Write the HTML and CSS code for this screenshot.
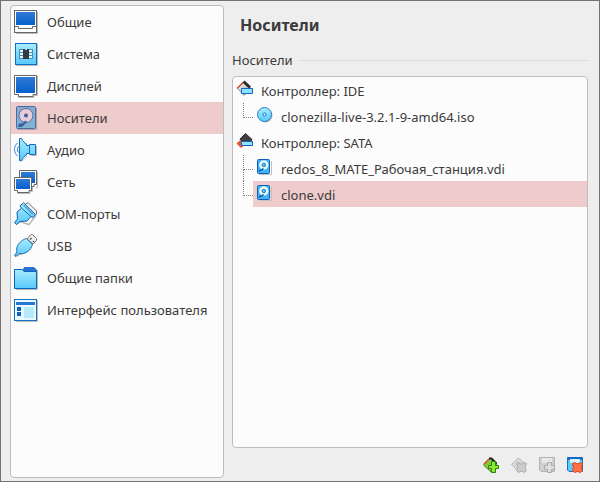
FILE: index.html
```html
<!DOCTYPE html>
<html lang="ru">
<head>
<meta charset="utf-8">
<title>Носители</title>
<link rel="stylesheet" href="styles.css">
</head>
<body>
<svg class="defs" aria-hidden="true">
  <defs>
    <linearGradient id="cyan" x1="0" y1="0" x2="0" y2="1"><stop offset="0" stop-color="#a8ecfc"/><stop offset="1" stop-color="#58c8fa"/></linearGradient>
    <linearGradient id="blue" x1="0" y1="0" x2="0" y2="1"><stop offset="0" stop-color="#2f7bd6"/><stop offset="1" stop-color="#0560cc"/></linearGradient>
    <linearGradient id="steel" x1="0" y1="0" x2="0" y2="1"><stop offset="0" stop-color="#8fa9cf"/><stop offset="1" stop-color="#7db4d2"/></linearGradient>
    <linearGradient id="grey" x1="0" y1="0" x2="1" y2="1"><stop offset="0" stop-color="#fff"/><stop offset="1" stop-color="#999"/></linearGradient>
    <symbol id="disk" viewBox="0 0 17 17">
      <path d="M3 16.500h12.500V3" fill="none" stroke="#c2c2c2"/>
      <rect x="1.500" y="1.500" width="12" height="14" rx="1" fill="#43b4f1" stroke="#0d62b8"/>
      <circle cx="7.800" cy="7" r="4.700" fill="#e3faff"/>
      <circle cx="7.800" cy="7" r="1.700" fill="#68c9f5" stroke="#1672c4"/>
      <path d="M3 13.500c1-2 3-1 4.500-3" fill="none" stroke="#0c5cb4" stroke-width="1.600"/>
    </symbol>
  </defs>
</svg>
<main class="window">
  <nav class="sections">
    <button class="section"><svg viewBox="0 0 24 24"><path d="M2 23.500h21.500V2" fill="none" stroke="#bbb"/><rect x=".5" y=".5" width="22" height="22" fill="#fff" stroke="#666"/><path d="M2 2h19v13H2z" fill="url(#blue)"/><path d="M1 16.500h3.500v2h14v-2H22" fill="none" stroke="#666"/></svg>Общие</button>
    <button class="section"><svg viewBox="0 0 24 24"><path d="M2 23.500h21.500V2" fill="none" stroke="#bbb"/><rect x="1.500" y="1.500" width="21" height="21" fill="url(#cyan)" stroke="#0f6cc8"/><path d="M5 7h14v10H5z" fill="#4a8fb8"/><path d="M6 8h12v2H6zM6 11h12v2H6zM6 14h12v2H6z" fill="#dffaff"/><path d="M9 7h6v10H9z" fill="#333842"/><path d="M11 7h2v1h-2z" fill="#8ee4fa"/></svg>Система</button>
    <button class="section"><svg viewBox="0 0 24 24"><path d="M4 23.500h16v-2h3.500V2" fill="none" stroke="#bbb"/><path d="M.5 1.500h22v19H19v2H4.500v-2h-4z" fill="#fff" stroke="#666"/><path d="M2 3h19v16H2z" fill="url(#blue)"/></svg>Дисплей</button>
    <button class="section selected" aria-current="page"><svg viewBox="0 0 24 24"><path d="M3 23.500h19.500V2" fill="none" stroke="#b99ca8"/><rect x="2.500" y=".5" width="19" height="22" rx="1" fill="url(#steel)" stroke="#456da8"/><circle cx="12" cy="9.500" r="7" fill="#e7ccd5" stroke="#536da8"/><circle cx="12" cy="9.500" r="2" fill="#405da4"/><path d="M4 20.500c0-3 2-4 4-3l3.500-3 1.500 1.500-3.500 3.500c-1.500 2-3.500 2-5.500 1z" fill="#3f5da3"/></svg>Носители</button>
    <button class="section"><svg viewBox="0 0 24 24"><path d="M3.500 5C-.5 9-.5 14 3.500 18M4.500 8.500c-1.500 2-1.500 4 0 6" fill="none" stroke="#3984d3"/><path d="M6.500 23.500c3-1 4-3 6.500-5.500M17 17.500h5.500V8" fill="none" stroke="#bbb"/><path d="M5.500.5h2C8.500 3 10.500 5 12.500 6v1.500h3v-1h6v10h-6v-1h-3V17c-2 1-4 3-5 5.500h-2z" fill="url(#cyan)" stroke="#146ac3"/><path d="M15.500 7.500v8" stroke="#146ac3"/></svg>Аудио</button>
    <button class="section"><svg viewBox="0 0 24 24"><path d="M22 17.500h1.500V2M3 23.500h13v-2h2.500V10" fill="none" stroke="#bbb"/><path d="M5.500.5h17v14H20v2H8v-2H5.500z" fill="#fff" stroke="#666"/><path d="M7 2h14v11H7z" fill="url(#blue)"/><path d="M.5 7.500h17v13H15v2H3.500v-2h-3z" fill="#fff" stroke="#666"/><path d="M2 9h14v10H2z" fill="url(#blue)"/></svg>Сеть</button>
    <button class="section"><svg viewBox="0 0 24 24"><path d="M11 2.500l3-2L22.500 9v3l-2 2z" fill="#eee" stroke="#777"/><path d="M2 22.500l4-3 9 3 7-9" fill="none" stroke="#bbb" stroke-width="1.500"/><path d="M.5 20.500l3-3.500-.5-7 4.500-4-1.500-2L9.500.8 21.500 12.500l-2.500 3-2-1-4 4.500-7 .5-3.500 3z" fill="url(#cyan)" stroke="#155faf"/><path d="M7.500 6l9.500 8.500M9.500 3l9.500 9.500" fill="none" stroke="#1768b9"/></svg>COM-порты</button>
    <button class="section"><svg viewBox="0 0 24 24"><path d="M13 5l4-4.500h1.500l4 4v2L19 10z" fill="#eee" stroke="#777"/><path d="M16 5.500l1.500-1.500M19 8l1-1" stroke="#555" stroke-width="1.500"/><path d="M3 22.500c2-4 9-1 14-9" fill="none" stroke="#bbb" stroke-width="1.500"/><path d="M.5 21.500L3 18C1 12 7 6 12.500 4.500l6 6C17 16 11 21 5 19.500l-3 3z" fill="url(#cyan)" stroke="#246cae"/></svg>USB</button>
    <button class="section"><svg viewBox="0 0 24 24"><path d="M2 23.500h21.500V4" fill="none" stroke="#bbb"/><path d="M8 4l2.500-3H20l3 3v2H8z" fill="#2873d0"/><path d="M.5 3.500H8l2 2h12.500v17H.5z" fill="url(#cyan)" stroke="#0d66bd"/></svg>Общие папки</button>
    <button class="section"><svg viewBox="0 0 24 24"><path d="M2 23.500h21.500V2" fill="none" stroke="#bbb"/><rect x=".5" y="1.500" width="22" height="21" fill="#e9f9fd" stroke="#196fc4"/><path d="M2 4h19v3H2z" fill="#2676d3"/><path d="M3 9h4v4H3zM3 14h4v4H3z" fill="#0962c6"/><path d="M10 9h10v11H10z" fill="#b5eafb"/></svg>Интерфейс пользователя</button>
  </nav>
  <section class="page">
    <h1>Носители</h1>
    <h2>Носители</h2>
    <ul class="tree" role="tree">
      <li role="treeitem" aria-expanded="true">
        <div class="node"><svg viewBox="0 0 17 17"><path d="M1.500 8.500l7-7 6.500 7-7 7z" fill="url(#grey)" stroke="#999"/><path d="M1 8.500l6-6" stroke="#d44a2c" stroke-width="1.500"/><path d="M7.500 1.500l6.500 6" stroke="#292b30" stroke-width="3"/><path d="M5.500 8.500h11v5h-11z" fill="#8ae5ff" stroke="#1265bd"/></svg>Контроллер: IDE</div>
        <ul role="group">
          <li class="node" role="treeitem"><svg viewBox="0 0 17 17"><circle cx="9.500" cy="9.500" r="7" fill="#bbb"/><circle cx="8.500" cy="8.500" r="7" fill="url(#cyan)" stroke="#287fce"/><circle cx="8.500" cy="8.500" r="1.500" fill="#cff" stroke="#1269bf"/></svg>clonezilla-live-3.2.1-9-amd64.iso</li>
        </ul>
      </li>
      <li role="treeitem" aria-expanded="true">
        <div class="node"><svg viewBox="0 0 17 17"><path d="M4 7l5.500-5.500L16 7.500l-3 6H7z" fill="#3c3e43" stroke="#333"/><path d="M.5 11.500L4.500 8l3 3v3l-2.500 2z" fill="#e9522d"/><path d="M5.500 9.500h11v4h-11z" fill="#8ae5ff" stroke="#1265bd"/></svg>Контроллер: SATA</div>
        <ul role="group">
          <li class="node" role="treeitem"><svg><use href="#disk"/></svg>redos_8_MATE_Рабочая_станция.vdi</li>
          <li class="node selected" role="treeitem" aria-selected="true"><svg><use href="#disk"/></svg>clone.vdi</li>
        </ul>
      </li>
    </ul>
    <div class="tools">
      <button aria-label="Добавить контроллер"><svg viewBox="0 0 16 16"><path d="M.5 8l6-6.500L9 2l5 5-6 8z" fill="#8bc63f" stroke="#5b7a30"/><path d="M1 7l5-5" stroke="#d84b2d" stroke-width="1.500"/><path d="M6 1.500h2.500l5 5" fill="none" stroke="#222" stroke-width="2"/><path d="M8.500 4.500h4v4h3v3h-3v4h-4v-4h-3v-3h3z" fill="#8aed2c" stroke="#2c8115"/></svg></button>
      <button disabled aria-label="Удалить контроллер"><svg viewBox="0 0 16 16"><path d="M.5 7.500l6-6h2l5 5-6 8z" fill="#d8d8d8" stroke="#b8b8b8"/><path d="M5.500 6.500l2-1 3 2 3-2 2 1-1.500 4 1.500 3-2 2-3-1.500-3 1.500-2-2 1.500-3z" fill="#ccc" stroke="#aaa"/></svg></button>
      <button disabled aria-label="Добавить носитель"><svg viewBox="0 0 16 16"><path d="M.5.5h15v14H2l-1.500-1.500z" fill="#d0d0d0" stroke="#b3b3b3"/><path d="M3 1h10v5H3z" fill="#e8e8e8"/><path d="M8.500 5.500h4v3h3v4h-3v3h-4v-3h-3v-4h3z" fill="#ddd" stroke="#aaa"/></svg></button>
      <button aria-label="Удалить носитель"><svg viewBox="0 0 16 16"><path d="M.5.5h15v14H2l-1.500-1.500z" fill="#62c9f5" stroke="#1672c2"/><path d="M1 0h14v3H1z" fill="#1769bd"/><path d="M3 2h10v4H3z" fill="#d2f3ff"/><path d="M5.500 6.500l2-1 3 1.500 3-1.500 2 1-1 4 1 3-2 2-3-1-3 1-2-2 1-3z" fill="#ff7042" stroke="#d94422"/></svg></button>
    </div>
  </section>
</main>
</body>
</html>
```
FILE: styles.css
```css
* {
  box-sizing: border-box;
}

body {
  margin: 0;
  background: #eeeeee;
  color: #3b3b3b;
  font: 13px/26px "Noto Sans", sans-serif;
}

.defs {
  position: absolute;
  width: 0;
  height: 0;
}

.window {
  display: grid;
  grid-template-columns: minmax(200px, 214fr) minmax(0, 356fr);
  gap: 8px;
  min-height: 100vh;
  padding: 4px 11px 3px 9px;
  border: 1px solid #727272;
}

.sections,
.tree {
  border: 1px solid #bdbdbd;
  border-radius: 4px;
  background: #fcfcfc;
}

.section {
  display: flex;
  align-items: center;
  gap: 9px;
  width: 100%;
  height: 32px;
  padding: 0 3px;
  border: 0;
  background: none;
  color: inherit;
  font: inherit;
  text-align: left;
  white-space: nowrap;
}

.section svg {
  flex: none;
  width: 24px;
  height: 24px;
}

.section.selected,
.node.selected {
  background: #edcccb;
}

.page {
  display: flex;
  flex-direction: column;
}

h1 {
  margin: 7px 0 9px 8px;
  font-size: 16px;
  line-height: 26px;
}

h2 {
  display: flex;
  align-items: center;
  gap: 7px;
  margin: 0 0 2px;
  font-size: 13px;
  font-weight: 400;
  line-height: 27px;
}

h2::after {
  content: "";
  flex: 1;
  height: 1px;
  background: #dcdcdc;
}

ul {
  margin: 0;
  padding: 0;
  list-style: none;
}

.tree {
  flex: 1;
}

.node {
  display: flex;
  align-items: center;
  gap: 8px;
  height: 26px;
  padding: 2px 3px 0;
  white-space: nowrap;
}

.node svg {
  flex: none;
  width: 17px;
  height: 17px;
  margin-bottom: 5px;
}

.tree ul {
  margin-left: 20px;
}

.tree ul .node {
  position: relative;
}

.tree ul .node::before {
  content: "";
  position: absolute;
  top: 0;
  left: -10px;
  width: 9px;
  height: 14px;
  border: dotted #808080;
  border-width: 0 0 1px 1px;
}

.tree ul .node:not(:last-child)::after {
  content: "";
  position: absolute;
  top: 14px;
  bottom: 0;
  left: -10px;
  border-left: 1px dotted #808080;
}

.tools {
  display: flex;
  justify-content: flex-end;
  gap: 12px;
  padding: 9px 5px 5px;
}

.tools button {
  width: 16px;
  height: 16px;
  padding: 0;
  border: 0;
  background: none;
}

.tools svg {
  display: block;
  width: 16px;
  height: 16px;
}
```
